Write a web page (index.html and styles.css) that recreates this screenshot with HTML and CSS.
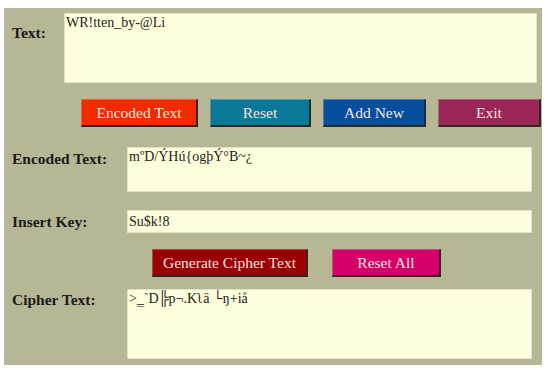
FILE: index.html
```html
<!DOCTYPE html>
<html lang="en">
<head>
  <meta charset="UTF-8" />
  <title>Cipher Text</title>
  <link rel="stylesheet" href="styles.css">
</head>
<body>
  <div class="panel">
    <div class="row row-text">
      <label class="label label-short">Text:</label>
      <div class="field field-text">WR!tten_by-@Li</div>
    </div>
    <div class="row buttons buttons-top">
      <button class="btn btn-encode">Encoded Text</button>
      <button class="btn btn-reset">Reset</button>
      <button class="btn btn-add">Add New</button>
      <button class="btn btn-exit">Exit</button>
    </div>
    <div class="row row-encoded">
      <label class="label">Encoded Text:</label>
      <div class="field field-encoded">mºD/ÝHú{ogþÝ°B~¿</div>
    </div>
    <div class="row row-key">
      <label class="label">Insert Key:</label>
      <div class="field field-key">Su$k!8</div>
    </div>
    <div class="row buttons buttons-bottom">
      <button class="btn btn-generate">Generate Cipher Text</button>
      <button class="btn btn-resetall">Reset All</button>
    </div>
    <div class="row row-cipher">
      <label class="label">Cipher Text:</label>
      <div class="field field-cipher">&gt;‗`D╠p¬.Kʅä └ŋ+iå</div>
    </div>
  </div>
</body>
</html>
```

FILE: styles.css
```css
body {
  margin: 0;
  background: #fff;
  font-family: "Liberation Serif", "Times New Roman", serif;
  color: #1a1a1a;
}
.panel {
  margin: 8px 0 0 4px;
  width: 538px;
  height: 357px;
  box-sizing: border-box;
  padding-top: 5px;
  background: #b8b795;
}
.row {
  display: flex;
  align-items: flex-start;
}
.label {
  width: 115px;
  padding-left: 8px;
  flex: none;
  font-weight: bold;
  font-size: 15.5px;
  line-height: 18px;
}
.label-short {
  width: 52px;
  padding-top: 11px;
}
.field {
  box-sizing: border-box;
  background: #fffedc;
  border: 1px solid #e2e1c8;
  font-size: 14px;
  line-height: 16px;
  padding: 1px 1px;
  color: #222;
}
.field-text {
  width: 473px;
  height: 70px;
}
.buttons-top {
  margin-top: 16px;
  padding-left: 77px;
  gap: 12px;
}
.row-encoded {
  margin-top: 20px;
}
.row-encoded .label {
  padding-top: 3px;
}
.field-encoded {
  width: 405px;
  height: 45px;
}
.row-key {
  margin-top: 18px;
}
.row-key .label {
  padding-top: 3px;
}
.field-key {
  width: 405px;
  height: 23px;
  padding-top: 3px;
}
.buttons-bottom {
  margin-top: 16px;
  padding-left: 148px;
  gap: 24px;
}
.row-cipher {
  margin-top: 12px;
}
.row-cipher .label {
  padding-top: 2px;
}
.field-cipher {
  width: 405px;
  height: 70px;
}
.btn {
  height: 28px;
  box-sizing: border-box;
  font-family: "Liberation Serif", "Times New Roman", serif;
  font-size: 15.5px;
  color: #f6e4e0;
  border: 1px solid rgba(255,255,255,0.25);
  border-right: 2px solid #2a2a22;
  border-bottom: 2px solid #2a2a22;
  padding: 0;
}
.btn-encode { width: 117px; background: #f02b00; }
.btn-reset { width: 101px; background: #0b7897; }
.btn-add { width: 103px; background: #064f9e; }
.btn-exit { width: 103px; background: #9a2757; }
.btn-generate { width: 156px; background: #990103; }
.btn-resetall { width: 109px; background: #d5006a; }
```
